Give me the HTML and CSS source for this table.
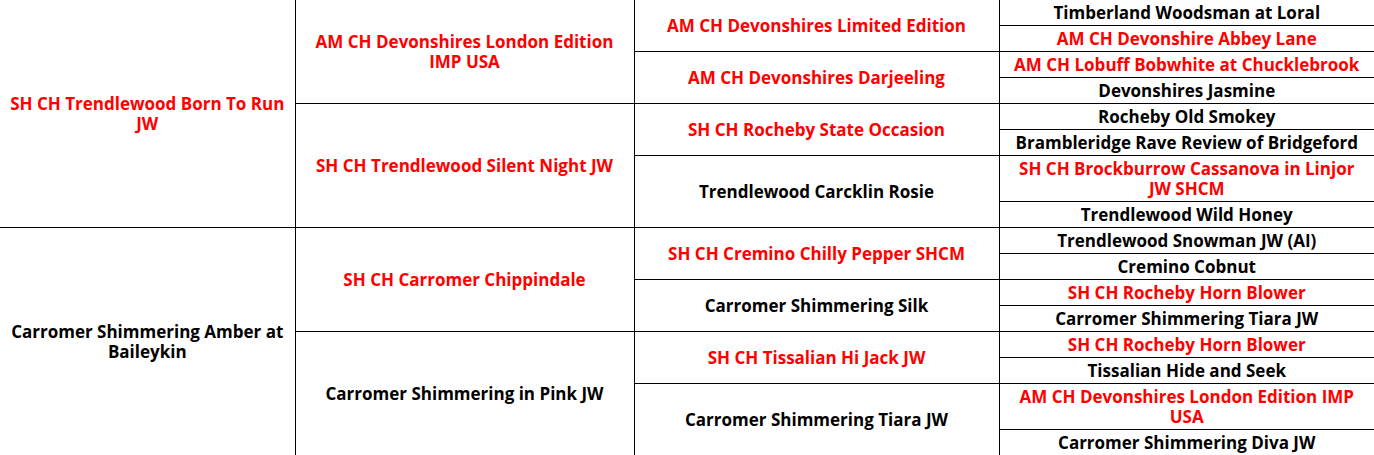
FILE: index.html
```html
<!DOCTYPE html>
<html>
<head>
<meta charset="utf-8">
<link rel="stylesheet" href="styles.css">
</head>
<body>
<table class="pedigree">
  <colgroup>
    <col class="c1"><col class="c2"><col class="c3"><col class="c4">
  </colgroup>
  <tr>
    <td rowspan="8" class="red">SH CH Trendlewood Born To Run JW</td>
    <td rowspan="4" class="red">AM CH Devonshires London Edition IMP USA</td>
    <td rowspan="2" class="red">AM CH Devonshires Limited Edition</td>
    <td>Timberland Woodsman at Loral</td>
  </tr>
  <tr><td class="red">AM CH Devonshire Abbey Lane</td></tr>
  <tr>
    <td rowspan="2" class="red">AM CH Devonshires Darjeeling</td>
    <td class="red">AM CH Lobuff Bobwhite at Chucklebrook</td>
  </tr>
  <tr><td>Devonshires Jasmine</td></tr>
  <tr>
    <td rowspan="4" class="red">SH CH Trendlewood Silent Night JW</td>
    <td rowspan="2" class="red">SH CH Rocheby State Occasion</td>
    <td>Rocheby Old Smokey</td>
  </tr>
  <tr><td>Brambleridge Rave Review of Bridgeford</td></tr>
  <tr>
    <td rowspan="2">Trendlewood Carcklin Rosie</td>
    <td class="red">SH CH Brockburrow Cassanova in Linjor JW SHCM</td>
  </tr>
  <tr><td>Trendlewood Wild Honey</td></tr>
  <tr>
    <td rowspan="8">Carromer Shimmering Amber at Baileykin</td>
    <td rowspan="4" class="red">SH CH Carromer Chippindale</td>
    <td rowspan="2" class="red">SH CH Cremino Chilly Pepper SHCM</td>
    <td>Trendlewood Snowman JW (AI)</td>
  </tr>
  <tr><td>Cremino Cobnut</td></tr>
  <tr>
    <td rowspan="2">Carromer Shimmering Silk</td>
    <td class="red">SH CH Rocheby Horn Blower</td>
  </tr>
  <tr><td>Carromer Shimmering Tiara JW</td></tr>
  <tr>
    <td rowspan="4">Carromer Shimmering in Pink JW</td>
    <td rowspan="2" class="red">SH CH Tissalian Hi Jack JW</td>
    <td class="red">SH CH Rocheby Horn Blower</td>
  </tr>
  <tr><td>Tissalian Hide and Seek</td></tr>
  <tr>
    <td rowspan="2">Carromer Shimmering Tiara JW</td>
    <td class="red">AM CH Devonshires London Edition IMP USA</td>
  </tr>
  <tr><td>Carromer Shimmering Diva JW</td></tr>
</table>
</body>
</html>
```
FILE: styles.css
```css
html, body {
  margin: 0;
  padding: 0;
  background: #fff;
}
.pedigree {
  width: 1374px;
  table-layout: fixed;
  border-collapse: collapse;
  border-style: hidden;
  font-family: "Open Sans", "Liberation Sans", sans-serif;
  font-weight: 700;
  font-size: 17px;
  line-height: 20px;
  color: #000;
}
.c1 { width: 295px; }
.c2 { width: 339px; }
.c3 { width: 365px; }
.c4 { width: 375px; }
.pedigree td {
  border: 1px solid #000;
  padding: 3px 7px 2px;
  text-align: center;
  vertical-align: middle;
}
.pedigree td.red {
  color: #ff0000;
}
```
